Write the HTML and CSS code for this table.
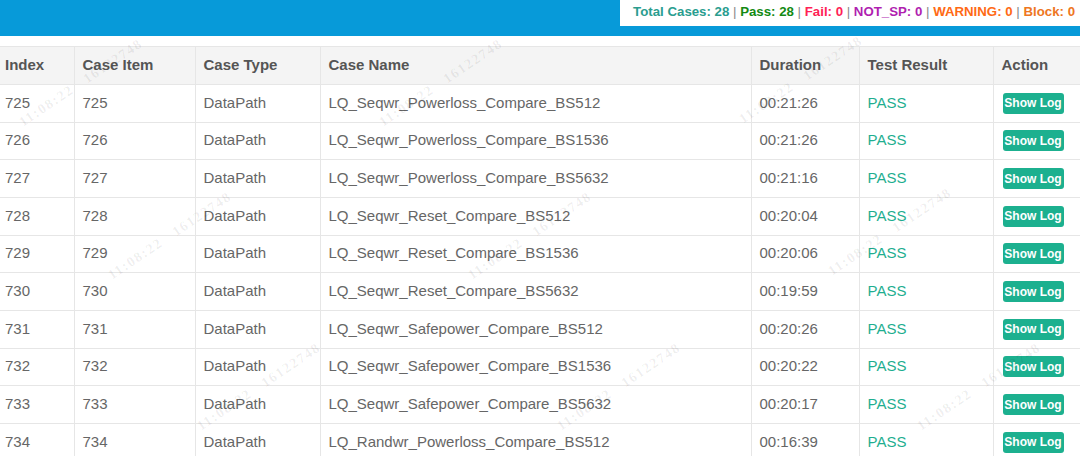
FILE: index.html
```html
<!DOCTYPE html>
<html>
<head>
<meta charset="utf-8">
<title>Test Report</title>
<link rel="stylesheet" href="styles.css">
</head>
<body>
<header class="topbar">
  <div class="summary"><span class="s-total">Total Cases: 28</span><span class="sep"> | </span><span class="s-pass">Pass: 28</span><span class="sep"> | </span><span class="s-fail">Fail: 0</span><span class="sep"> | </span><span class="s-notsp">NOT_SP: 0</span><span class="sep"> | </span><span class="s-warn">WARNING: 0</span><span class="sep"> | </span><span class="s-block">Block: 0</span></div>
</header>
<main class="content">
  <table class="cases">
    <colgroup>
      <col class="c-index"><col class="c-item"><col class="c-type"><col class="c-name"><col class="c-dur"><col class="c-res"><col class="c-act">
    </colgroup>
    <thead>
      <tr><th>Index</th><th>Case Item</th><th>Case Type</th><th>Case Name</th><th>Duration</th><th>Test Result</th><th>Action</th></tr>
    </thead>
    <tbody>
      <tr><td>725</td><td>725</td><td>DataPath</td><td>LQ_Seqwr_Powerloss_Compare_BS512</td><td>00:21:26</td><td class="pass">PASS</td><td><button class="log">Show Log</button></td></tr>
      <tr><td>726</td><td>726</td><td>DataPath</td><td>LQ_Seqwr_Powerloss_Compare_BS1536</td><td>00:21:26</td><td class="pass">PASS</td><td><button class="log">Show Log</button></td></tr>
      <tr><td>727</td><td>727</td><td>DataPath</td><td>LQ_Seqwr_Powerloss_Compare_BS5632</td><td>00:21:16</td><td class="pass">PASS</td><td><button class="log">Show Log</button></td></tr>
      <tr><td>728</td><td>728</td><td>DataPath</td><td>LQ_Seqwr_Reset_Compare_BS512</td><td>00:20:04</td><td class="pass">PASS</td><td><button class="log">Show Log</button></td></tr>
      <tr><td>729</td><td>729</td><td>DataPath</td><td>LQ_Seqwr_Reset_Compare_BS1536</td><td>00:20:06</td><td class="pass">PASS</td><td><button class="log">Show Log</button></td></tr>
      <tr><td>730</td><td>730</td><td>DataPath</td><td>LQ_Seqwr_Reset_Compare_BS5632</td><td>00:19:59</td><td class="pass">PASS</td><td><button class="log">Show Log</button></td></tr>
      <tr><td>731</td><td>731</td><td>DataPath</td><td>LQ_Seqwr_Safepower_Compare_BS512</td><td>00:20:26</td><td class="pass">PASS</td><td><button class="log">Show Log</button></td></tr>
      <tr><td>732</td><td>732</td><td>DataPath</td><td>LQ_Seqwr_Safepower_Compare_BS1536</td><td>00:20:22</td><td class="pass">PASS</td><td><button class="log">Show Log</button></td></tr>
      <tr><td>733</td><td>733</td><td>DataPath</td><td>LQ_Seqwr_Safepower_Compare_BS5632</td><td>00:20:17</td><td class="pass">PASS</td><td><button class="log">Show Log</button></td></tr>
      <tr><td>734</td><td>734</td><td>DataPath</td><td>LQ_Randwr_Powerloss_Compare_BS512</td><td>00:16:39</td><td class="pass">PASS</td><td><button class="log">Show Log</button></td></tr>
    </tbody>
  </table>
</main>
<div class="watermarks" aria-hidden="true">
  <span class="wm wm-a0">11:08:22   16122748</span>
  <span class="wm wm-a1">11:08:22   16122748</span>
  <span class="wm wm-a2">11:08:22   16122748</span>
  <span class="wm wm-b0">11:08:22   16122748</span>
  <span class="wm wm-b1">11:08:22   16122748</span>
  <span class="wm wm-b2">11:08:22   16122748</span>
  <span class="wm wm-c0">11:08:22   16122748</span>
  <span class="wm wm-c1">11:08:22   16122748</span>
  <span class="wm wm-c2">11:08:22   16122748</span>
</div>
</body>
</html>
```

FILE: styles.css
```css
html, body {
  margin: 0;
  padding: 0;
  overflow: hidden;
  background: #fff;
}
body {
  font-family: "Liberation Sans", Arial, sans-serif;
  color: #666;
  position: relative;
  height: 456px;
}

.topbar {
  height: 36px;
  background: #079ad9;
  display: flex;
  justify-content: flex-end;
  align-items: flex-start;
}
.summary {
  height: 26px;
  background: #fff;
  padding: 0 5px 0 13px;
  font-size: 13.25px;
  font-weight: bold;
  line-height: 24px;
  white-space: pre;
}
.sep { color: #888; font-weight: normal; }
.s-total { color: #2a9d8f; }
.s-pass { color: #138a13; }
.s-fail { color: #ff2255; }
.s-notsp { color: #b01fb0; }
.s-warn { color: #ff6a14; }
.s-block { color: #ee7622; }

.content {
  padding-top: 10px;
}
.cases {
  border-collapse: collapse;
  table-layout: fixed;
  width: 1090px;
  margin-left: -3px;
  font-size: 15px;
}
.c-index { width: 77px; }
.c-item { width: 121px; }
.c-type { width: 125px; }
.c-name { width: 431px; }
.c-dur { width: 108px; }
.c-res { width: 134px; }
.c-act { width: 94px; }

.cases th, .cases td {
  text-align: left;
  padding: 0 8px 2px;
  border: 1px solid #e6e6e6;
  white-space: nowrap;
}
.cases th:first-child, .cases td:first-child { border-left: none; }
.cases th {
  background: #f4f4f4;
  color: #555;
  font-weight: bold;
  height: 35px;
}
.cases td {
  height: 34.67px;
}
.cases tbody td {
  border-top-color: #e2e2e2;
}
.pass { color: #1fae90; }

.log {
  background: #1cb08f;
  color: #fff;
  border: none;
  border-radius: 3px;
  font-family: "Liberation Sans", Arial, sans-serif;
  font-size: 12px;
  font-weight: bold;
  height: 21px;
  width: 61px;
  padding: 0;
  margin: 2px 0 0 1px;
  display: block;
}

.watermarks {
  position: absolute;
  inset: 0;
  pointer-events: none;
  overflow: hidden;
}
.wm {
  position: absolute;
  width: 220px;
  margin-left: -110px;
  margin-top: -10px;
  line-height: 20px;
  text-align: center;
  white-space: pre;
  font-family: "Liberation Serif", "Times New Roman", serif;
  font-weight: bold;
  font-size: 14px;
  letter-spacing: 1.5px;
  color: rgba(0, 0, 0, 0.07);
  transform: rotate(-34deg);
}
.wm-a0 { left: 81px; top: 83px; }
.wm-a1 { left: 441px; top: 83px; }
.wm-a2 { left: 801px; top: 80px; }
.wm-b0 { left: 170px; top: 236px; }
.wm-b1 { left: 530px; top: 236px; }
.wm-b2 { left: 890px; top: 232px; }
.wm-c0 { left: 259px; top: 387px; }
.wm-c1 { left: 619px; top: 387px; }
.wm-c2 { left: 979px; top: 387px; }
```
